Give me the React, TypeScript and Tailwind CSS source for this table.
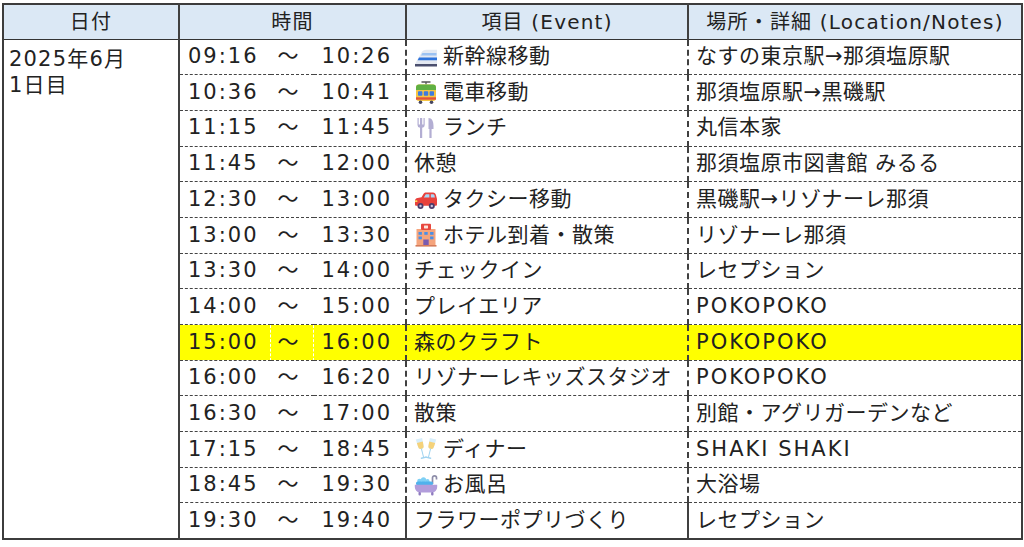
import React from "react"

type IconName = "shinkansen" | "tram" | "fork" | "car" | "hotel" | "glasses" | "bath"

type Row = {
  from: string
  to: string
  icon?: IconName
  event: string
  place: string
  hl?: boolean
}

const rows: Row[] = [
  { from: "09:16", to: "10:26", icon: "shinkansen", event: "新幹線移動", place: "なすの東京駅→那須塩原駅" },
  { from: "10:36", to: "10:41", icon: "tram", event: "電車移動", place: "那須塩原駅→黒磯駅" },
  { from: "11:15", to: "11:45", icon: "fork", event: "ランチ", place: "丸信本家" },
  { from: "11:45", to: "12:00", event: "休憩", place: "那須塩原市図書館 みるる" },
  { from: "12:30", to: "13:00", icon: "car", event: "タクシー移動", place: "黒磯駅→リゾナーレ那須" },
  { from: "13:00", to: "13:30", icon: "hotel", event: "ホテル到着・散策", place: "リゾナーレ那須" },
  { from: "13:30", to: "14:00", event: "チェックイン", place: "レセプション" },
  { from: "14:00", to: "15:00", event: "プレイエリア", place: "POKOPOKO" },
  { from: "15:00", to: "16:00", event: "森のクラフト", place: "POKOPOKO", hl: true },
  { from: "16:00", to: "16:20", event: "リゾナーレキッズスタジオ", place: "POKOPOKO" },
  { from: "16:30", to: "17:00", event: "散策", place: "別館・アグリガーデンなど" },
  { from: "17:15", to: "18:45", icon: "glasses", event: "ディナー", place: "SHAKI SHAKI" },
  { from: "18:45", to: "19:30", icon: "bath", event: "お風呂", place: "大浴場" },
  { from: "19:30", to: "19:40", event: "フラワーポプリづくり", place: "レセプション" },
]

function Icon({ name }: { name: IconName }) {
  const cls = "w-[24px] h-[24px] shrink-0"
  switch (name) {
    case "shinkansen":
      return (
        <svg viewBox="0 0 24 24" className={cls}>
          <path d="M1 19 L7.5 7.5 C8.6 5.6 10 4.8 12.2 4.8 H23 V19 Z" fill="#e4e9f2" />
          <path d="M8.4 8 H22.5 V10.4 H7 Z" fill="#9cc2f2" />
          <path d="M5 12.6 H23 V15.2 H3.6 Z" fill="#2f74dc" />
          <path d="M1 19 H23 V21.5 H1 Z" fill="#4b4f6e" />
        </svg>
      )
    case "tram":
      return (
        <svg viewBox="0 0 24 24" className={cls}>
          <path d="M7.5 1 H16.5 M12 1 V3.5" stroke="#555" strokeWidth="1.3" />
          <rect x="2" y="3.5" width="20" height="16.5" rx="3" fill="#f6c544" />
          <path d="M2 6.5 a3 3 0 0 1 3 -3 h14 a3 3 0 0 1 3 3 v2.5 H2 z" fill="#5fb043" />
          <rect x="4" y="10.3" width="4.4" height="4.4" rx="0.8" fill="#3d7be0" />
          <rect x="9.8" y="10.3" width="4.4" height="4.4" rx="0.8" fill="#3d7be0" />
          <rect x="15.6" y="10.3" width="4.4" height="4.4" rx="0.8" fill="#3d7be0" />
          <rect x="2" y="16.3" width="20" height="2.4" fill="#e2533c" />
          <circle cx="6.5" cy="21.2" r="1.8" fill="#464660" />
          <circle cx="17.5" cy="21.2" r="1.8" fill="#464660" />
        </svg>
      )
    case "fork":
      return (
        <svg viewBox="0 0 24 24" className={cls}>
          <path
            d="M3.5 2 V9 A2.8 2.8 0 0 0 6 11.8 V22 H8.2 V11.8 A2.8 2.8 0 0 0 10.7 9 V2 H9.5 V8.4 H8.2 V2 H6 V8.4 H4.7 V2 Z"
            fill="#b3aed3"
          />
          <path d="M14.5 2 C18 2 19.5 5.5 19.5 10 V13 H17.6 V22 H15.4 V13 H14.5 Z" fill="#b3aed3" />
        </svg>
      )
    case "car":
      return (
        <svg viewBox="0 0 24 24" className={cls}>
          <path
            d="M1 16.5 V12.8 C1 11.2 2 10.2 3.6 9.9 L7.5 9.2 L9.6 5.8 C10.2 4.9 11 4.5 12 4.5 H19 C20.6 4.5 21.5 5.6 22 7.2 L23 11 V16.5 C23 17.3 22.5 17.8 21.7 17.8 H2.3 C1.5 17.8 1 17.3 1 16.5 Z"
            fill="#e8413c"
          />
          <path d="M9.8 9.6 L11.8 6.2 H15.4 V9.6 Z" fill="#a6d8f7" />
          <path d="M16.8 6.2 H19 C19.7 6.2 20.1 6.7 20.3 7.3 L21 9.6 H16.8 Z" fill="#a6d8f7" />
          <rect x="1" y="12.3" width="2.4" height="1.7" rx="0.6" fill="#ffd35c" />
          <circle cx="6.5" cy="18" r="3" fill="#4b3b6b" />
          <circle cx="6.5" cy="18" r="1.2" fill="#c9c3dc" />
          <circle cx="17.8" cy="18" r="3" fill="#4b3b6b" />
          <circle cx="17.8" cy="18" r="1.2" fill="#c9c3dc" />
        </svg>
      )
    case "hotel":
      return (
        <svg viewBox="0 0 24 24" className={cls}>
          <rect x="2.5" y="6" width="19" height="17" fill="#f5a47c" />
          <rect x="7" y="0.8" width="10" height="6.2" rx="1" fill="#e8483f" />
          <rect x="10" y="2.4" width="4" height="3" rx="0.4" fill="#fde3dc" />
          <rect x="4.5" y="9" width="3.4" height="2.8" fill="#4a8fe6" />
          <rect x="10.3" y="9" width="3.4" height="2.8" fill="#4a8fe6" />
          <rect x="16.1" y="9" width="3.4" height="2.8" fill="#4a8fe6" />
          <rect x="4.5" y="13.5" width="3.4" height="2.8" fill="#4a8fe6" />
          <rect x="16.1" y="13.5" width="3.4" height="2.8" fill="#4a8fe6" />
          <rect x="9.3" y="16.5" width="5.4" height="6.5" fill="#7a5bb0" />
          <rect x="1.5" y="22" width="21" height="1.6" fill="#d57c5a" />
        </svg>
      )
    case "glasses":
      return (
        <svg viewBox="0 0 24 24" className={cls}>
          <g transform="rotate(-14 7.5 12)">
            <path d="M4.2 1.5 H10.8 L10.3 9 A2.8 2.8 0 0 1 4.7 9 Z" fill="#d7eefb" />
            <path d="M4.5 5 H10.6 L10.3 9 A2.8 2.8 0 0 1 4.7 9 Z" fill="#f5d27a" />
            <rect x="7" y="11.5" width="1" height="9" fill="#9fd3f0" />
            <rect x="4.5" y="20.2" width="6" height="1.4" rx="0.6" fill="#9fd3f0" />
          </g>
          <g transform="rotate(14 16.5 12)">
            <path d="M13.2 1.5 H19.8 L19.3 9 A2.8 2.8 0 0 1 13.7 9 Z" fill="#d7eefb" />
            <path d="M13.5 5 H19.6 L19.3 9 A2.8 2.8 0 0 1 13.7 9 Z" fill="#f5d27a" />
            <rect x="16" y="11.5" width="1" height="9" fill="#9fd3f0" />
            <rect x="13.5" y="20.2" width="6" height="1.4" rx="0.6" fill="#9fd3f0" />
          </g>
        </svg>
      )
    case "bath":
      return (
        <svg viewBox="0 0 24 24" className={cls}>
          <path d="M18.5 11 V4.8 A2 2 0 0 1 22.5 4.8 V6.5" stroke="#8d8ca8" strokeWidth="1.7" fill="none" />
          <circle cx="5.5" cy="8" r="2.3" fill="#7fd0f5" />
          <circle cx="9.5" cy="6.8" r="2.6" fill="#7fd0f5" />
          <circle cx="13.5" cy="8.2" r="2.1" fill="#7fd0f5" />
          <rect x="2" y="8.5" width="17" height="4" rx="1.8" fill="#4fb2ec" />
          <path d="M0.8 11.8 H23.2 V14 A5.5 5.5 0 0 1 17.7 19.5 H6.3 A5.5 5.5 0 0 1 0.8 14 Z" fill="#b29ddb" />
          <rect x="4.5" y="19" width="2.4" height="3.5" rx="1" fill="#8e7bbf" />
          <rect x="17.1" y="19" width="2.4" height="3.5" rx="1" fill="#8e7bbf" />
        </svg>
      )
  }
}

export default function App() {
  return (
    <div className="w-[1024px] h-[547px] bg-white pt-[3px] pl-[2px] overflow-hidden">
      <table className="table-fixed border-collapse w-[1019px] border-2 border-[#3c3c3c] text-[#222] text-[21px] tracking-[0.5px] font-['DejaVu_Sans','Noto_Sans_CJK_JP',sans-serif]">
        <colgroup>
          <col className="w-[176px]" />
          <col className="w-[91px]" />
          <col className="w-[43px]" />
          <col className="w-[93px]" />
          <col className="w-[282px]" />
          <col className="w-[334px]" />
        </colgroup>
        <thead>
          <tr className="h-[35px] bg-[#dbe8f5] text-[20px] tracking-[1.2px]">
            <th className="font-normal border-r-2 border-r-[#404040] border-b border-b-[#333]">日付</th>
            <th colSpan={3} className="font-normal border-r-2 border-r-[#404040] border-b border-b-[#333]">
              時間
            </th>
            <th className="font-normal border-r-2 border-r-[#404040] border-b border-b-[#333]">項目 (Event)</th>
            <th className="font-normal border-b border-b-[#333]">場所・詳細 (Location/Notes)</th>
          </tr>
        </thead>
        <tbody>
          {rows.map((r, i) => {
            const bg = r.hl ? "bg-[#ffff00]" : ""
            const line = i < rows.length - 1 ? "border-b border-dashed border-b-[#444]" : ""
            return (
              <tr key={i} className="h-[35.7px]">
                {i === 0 && (
                  <td
                    rowSpan={rows.length}
                    className="align-top pl-[5px] pt-[6px] leading-[26px] tracking-[1.2px] border-r-2 border-r-[#404040]"
                  >
                    2025年6月
                    <br />
                    1日目
                  </td>
                )}
                <td className={`pl-[8px] tracking-[2px] border-r border-r-white ${bg} ${line}`}>{r.from}</td>
                <td className={`pl-[7px] border-r border-r-white ${bg} ${line}`}>～</td>
                <td className={`pl-[8px] tracking-[2px] border-r-2 border-r-[#404040] ${bg} ${line}`}>{r.to}</td>
                <td className={`pl-[7px] border-r-2 border-r-[#404040] ${bg} ${line}`}>
                  <div className="flex items-center gap-[5px]">
                    {r.icon && <Icon name={r.icon} />}
                    <span className="whitespace-nowrap">{r.event}</span>
                  </div>
                </td>
                <td
                  className={`pl-[7px] whitespace-nowrap ${/^[A-Z ]+$/.test(r.place) ? "tracking-[2px]" : ""} ${bg} ${line}`}
                >
                  {r.place}
                </td>
              </tr>
            )
          })}
        </tbody>
      </table>
    </div>
  )
}
